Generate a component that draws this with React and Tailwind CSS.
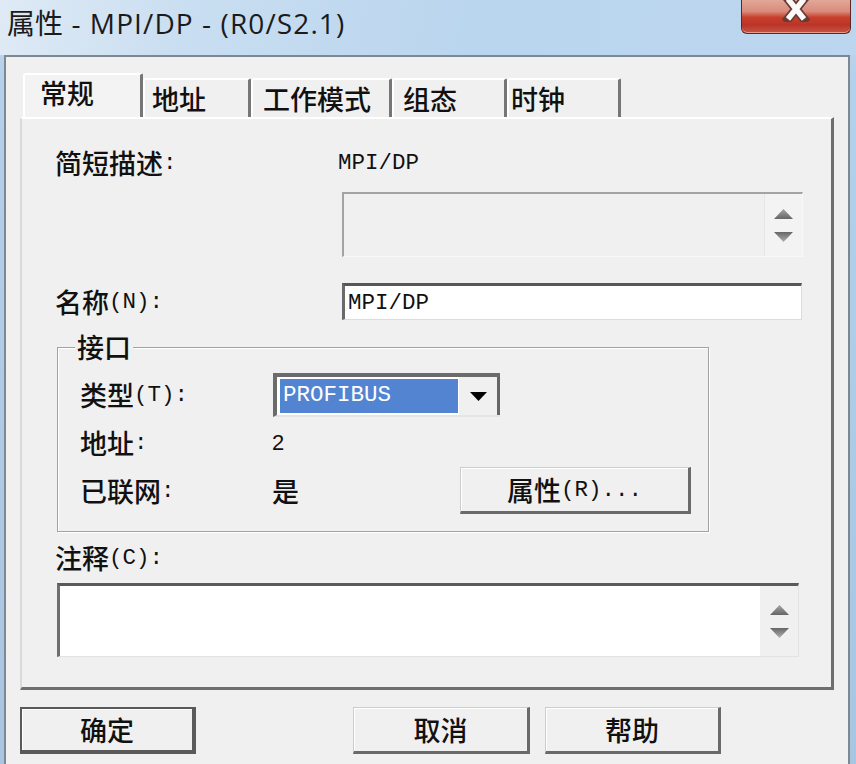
import React from "react";

const mono = "font-['Liberation_Mono',monospace] text-[22.5px]";

function Label({ cjk, ascii, className = "" }) {
  return (
    <span className={`flex items-center h-[30px] whitespace-nowrap ${className}`}>
      <span className="text-[27px] leading-[30px]">{cjk}</span>
      {ascii && <span className={`${mono} leading-[30px]`}>{ascii}</span>}
    </span>
  );
}

function Arrow({ up }) {
  return (
    <svg width="19" height="10" viewBox="0 0 19 10">
      <defs>
        <linearGradient id={up ? "gu" : "gd"} x1="0" y1="0" x2="0" y2="1">
          <stop offset="0" stopColor={up ? "#a4a4a4" : "#666"} />
          <stop offset="1" stopColor={up ? "#666" : "#b0b0b0"} />
        </linearGradient>
      </defs>
      <path d={up ? "M9.5 0 L19 10 L0 10 Z" : "M0 0 L19 0 L9.5 10 Z"} fill={`url(#${up ? "gu" : "gd"})`} />
    </svg>
  );
}

function Spin({ className = "" }) {
  return (
    <div className={`w-[38px] h-full flex flex-col items-center justify-center gap-[13px] ${className}`}>
      <Arrow up />
      <Arrow />
    </div>
  );
}

function Tab({ label, selected, className = "" }) {
  return (
    <div
      className={`flex items-center border-t-2 border-l-2 border-r-[3px] border-t-white border-l-white border-r-[#767676] rounded-tl-[3px] rounded-tr-[2px] ${
        selected ? "h-[44px] pb-[6px] bg-[#f3f3f3]" : "h-[39px]"
      } ${className}`}
    >
      <span className="text-[27px] leading-[30px]">{label}</span>
    </div>
  );
}

function Button({ children, def, className = "" }) {
  return (
    <div
      className={`flex items-center justify-center bg-[#f0f0f0] ${
        def
          ? "border-t-2 border-l-2 border-r-[4px] border-b-[4px] border-[#5a5a5a] shadow-[inset_1px_1px_0_#fff]"
          : "border-t border-l border-t-[#cdcdcd] border-l-[#cdcdcd] border-r-[3px] border-b-[3px] border-r-[#6a6a6a] border-b-[#6a6a6a] shadow-[inset_1px_1px_0_#fff]"
      } ${className}`}
    >
      {children}
    </div>
  );
}

export default function App() {
  return (
    <div className="w-[856px] h-[764px] overflow-hidden flex flex-col bg-[linear-gradient(180deg,#c3daef_0%,#b5d0ea_10%,#a9c5e1_100%)] text-[#111] font-['Noto_Sans_CJK_SC',sans-serif] font-medium">
      {/* title bar */}
      <div className="h-[55px] shrink-0 flex items-start justify-between bg-[linear-gradient(100deg,#dfeaf5_0%,#c9def1_22%,#bad5ee_55%,#bcd6ef_100%)]">
        <div className="pl-[7px] pt-[4px] text-[28px] leading-[36px] text-[#1b1b1b] font-normal whitespace-nowrap">
          <span>属性</span>
          <span className="font-['Open_Sans',sans-serif] tracking-[1.1px]"> - MPI/DP - (R0/S2.1)</span>
        </div>
        <div className="mr-[5px] w-[110px] h-[34px] rounded-b-[6px] border border-t-0 border-[#5c2722] flex justify-center bg-[linear-gradient(180deg,#e2a797_0%,#d98b7c_35%,#c9402c_52%,#bb3427_75%,#c55546_100%)] shadow-[inset_0_-1px_0_#e99a8a]">
          <svg width="28" height="24" viewBox="0 0 28 24" className="mt-[-2px]">
            <path d="M6 1 L22 21 M22 1 L6 21" stroke="#6a3a34" strokeWidth="9" strokeLinecap="square" />
            <path d="M6 1 L22 21 M22 1 L6 21" stroke="#fafafa" strokeWidth="5.5" strokeLinecap="butt" />
          </svg>
        </div>
      </div>

      {/* dialog body */}
      <div className="ml-[4px] w-[846px] flex-1 bg-[#f0f0f0] border-t-2 border-l-2 border-r-2 border-[#7d8893] pt-[16px] pl-[14px] pr-[14px] flex flex-col">
        {/* tabs */}
        <div className="flex items-end h-[44px] pl-[3px]">
          <Tab label="常规" selected className="w-[120px] pl-[15px]" />
          <Tab label="地址" className="w-[108px] pl-[7px]" />
          <Tab label="工作模式" className="w-[141px] pl-[10px]" />
          <Tab label="组态" className="w-[115px] pl-[9px]" />
          <Tab label="时钟" className="w-[114px] pl-[2px]" />
        </div>

        {/* tab panel */}
        <div className="h-[573px] border-t-2 border-l-2 border-t-white border-l-[#dadada] border-r-[3px] border-b-[3px] border-r-[#6e6e6e] border-b-[#6e6e6e] pl-[33px] pt-[29px] flex flex-col">
          <div className="flex items-center h-[30px]">
            <Label cjk="简短描述" ascii=":" className="w-[283px]" />
            <span className={`${mono} leading-[30px]`}>MPI/DP</span>
          </div>

          <div className="ml-[287px] mt-[14px] w-[461px] h-[65px] flex justify-end border-t-2 border-l-2 border-t-[#a3a3a3] border-l-[#a3a3a3] border-r border-b border-r-[#f8f8f8] border-b-[#f8f8f8] bg-[#f0f0f0]">
            <Spin className="bg-[#f3f3f3] border-l border-l-[#e6e6e6]" />
          </div>

          <div className="mt-[26px] flex items-center h-[37px]">
            <Label cjk="名称" ascii="(N):" className="w-[287px]" />
            <div className="w-[460px] h-[37px] flex items-center bg-white border-t-[3px] border-l-[3px] border-t-[#575757] border-l-[#6a6a6a] border-r border-b border-r-[#dcdcdc] border-b-[#dcdcdc] pl-[3px]">
              <span className={`${mono} leading-[30px]`}>MPI/DP</span>
            </div>
          </div>

          {/* group box */}
          <div className="relative mt-[27px] ml-[2px] w-[652px] h-[185px] border border-[#a2a2a2] shadow-[inset_1px_1px_0_#fff,1px_1px_0_#fff] pl-[22px] pt-[25px] flex flex-col">
            <span className="absolute -top-[16px] left-[17px] bg-[#f0f0f0] px-[2px] text-[27px] leading-[30px]">接口</span>

            <div className="flex items-center h-[44px]">
              <Label cjk="类型" ascii="(T):" className="w-[193px]" />
              <div className="flex w-[227px] h-[44px] border-t-[4px] border-l-[4px] border-b-2 border-t-[#6b6b6b] border-l-[#6b6b6b] border-b-[#e4e4e4] bg-white">
                <div className="w-[181px] h-full pl-[3px] py-[2px]">
                  <div className={`w-full h-full bg-[#5284d2] text-white flex items-center pl-[3px] ${mono}`}>PROFIBUS</div>
                </div>
                <div className="w-[42px] h-full bg-[#f0f0f0] border-r-[3px] border-r-[#666] border-l border-l-white flex items-center justify-center">
                  <svg width="17" height="9" viewBox="0 0 17 9">
                    <path d="M0 0 L17 0 L8.5 9 Z" fill="#000" />
                  </svg>
                </div>
              </div>
            </div>

            <div className="mt-[11px] flex items-center h-[30px]">
              <Label cjk="地址" ascii=":" className="w-[192px]" />
              <span className="font-['Liberation_Sans',sans-serif] font-normal text-[22px] leading-[30px]">2</span>
            </div>

            <div className="mt-[9px] flex items-center h-[47px]">
              <Label cjk="已联网" ascii=":" className="w-[192px]" />
              <span className="w-[188px] text-[27px] leading-[30px]">是</span>
              <Button className="w-[231px] h-[47px]">
                <Label cjk="属性" ascii="(R)..." />
              </Button>
            </div>
          </div>

          <div className="mt-[11px]">
            <Label cjk="注释" ascii="(C):" />
          </div>

          <div className="mt-[10px] ml-[2px] w-[742px] h-[74px] flex justify-end bg-white border-t-[3px] border-l-[3px] border-t-[#5a5a5a] border-l-[#6e6e6e] border-r border-b border-r-[#e2e2e2] border-b-[#e2e2e2]">
            <Spin className="bg-[#f0f0f0]" />
          </div>
        </div>

        {/* buttons */}
        <div className="mt-[17px] flex items-start">
          <Button def className="w-[176px] h-[47px]">
            <span className="text-[27px] leading-[30px]">确定</span>
          </Button>
          <Button className="ml-[157px] w-[177px] h-[47px]">
            <span className="text-[27px] leading-[30px]">取消</span>
          </Button>
          <Button className="ml-[15px] w-[176px] h-[47px]">
            <span className="text-[27px] leading-[30px]">帮助</span>
          </Button>
        </div>
      </div>
    </div>
  );
}
